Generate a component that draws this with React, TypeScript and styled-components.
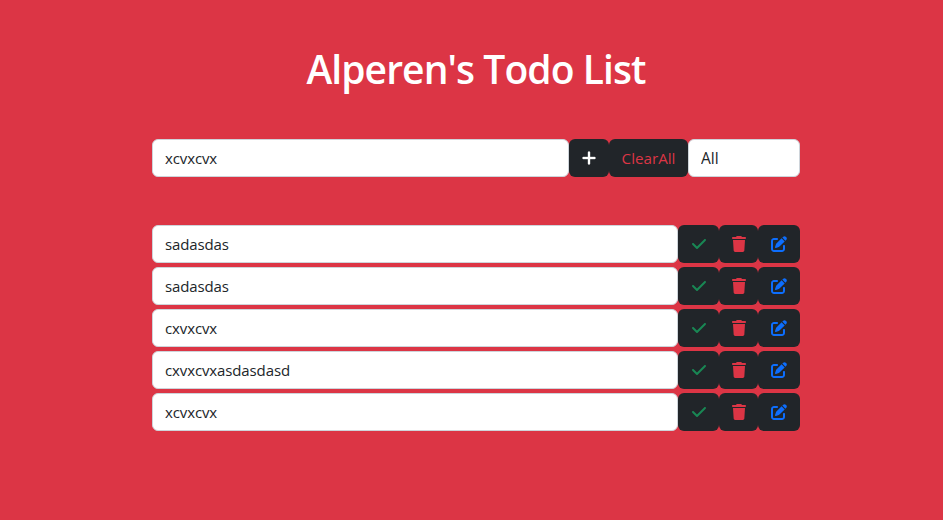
import React from "react";
import styled, { createGlobalStyle } from "styled-components";
import { FaCheck, FaPlus, FaPenToSquare, FaTrash } from "react-icons/fa6";

const Global = createGlobalStyle`
  *, *::before, *::after { box-sizing: border-box; }
  body {
    margin: 0;
    background: #dc3545;
    color: #212529;
    font: 400 16px/24px "Open Sans", "Noto Sans", sans-serif;
  }
`;

const Page = styled.main`
  width: 648px;
  margin-left: 152px;
  padding-top: 45px;
`;

const Title = styled.h1`
  margin: 0 0 46px;
  color: #fff;
  text-align: center;
  font-weight: 600;
  font-size: 39px;
  line-height: 48px;
  letter-spacing: -0.92px;
  white-space: nowrap;
`;

const Row = styled.div`
  display: flex;
  height: 38px;
`;

const TodoList = styled.section`
  display: flex;
  flex-direction: column;
  gap: 4px;
  margin-top: 48px;
`;

const Field = styled.input`
  flex: 1;
  min-width: 0;
  padding: 6px 12px;
  border: 1px solid #ced4da;
  border-radius: 6px;
  background: #fff;
  color: #212529;
  font: inherit;
  font-size: 15px;
  letter-spacing: -0.12px;
  outline: none;
`;

const Filter = styled.select`
  flex: 0 0 112px;
  padding: 6px 12px;
  border: 1px solid #ced4da;
  border-radius: 6px;
  appearance: none;
  background: #fff;
  color: #212529;
  font: inherit;
  font-size: 15.5px;
  outline: none;
`;

const Button = styled.button<{ $color: string; $width: number }>`
  display: flex;
  flex: 0 0 ${(p) => p.$width}px;
  align-items: center;
  justify-content: center;
  padding: 0;
  border: 0;
  border-radius: 6px;
  background: #212529;
  color: ${(p) => p.$color};
  font: inherit;
  font-size: 15.2px;

  svg { width: auto; height: 16px; }
`;

const AddButton = styled(Button)`
  svg { stroke: currentColor; stroke-width: 12px; }
`;

const DeleteButton = styled(Button)`
  padding-left: 1px;
`;

const todos = ["sadasdas", "sadasdas", "cxvxcvx", "cxvxcvxasdasdasd", "xcvxcvx"];

export default function App() {
  return (
    <>
      <Global />
      <Page>
        <Title>Alperen's Todo List</Title>
        <Row>
          <Field defaultValue="xcvxcvx" />
          <AddButton $color="#fff" $width={40} aria-label="Add"><FaPlus /></AddButton>
          <Button $color="#dc3545" $width={79}>ClearAll</Button>
          <Filter defaultValue="All"><option>All</option></Filter>
        </Row>
        <TodoList>
          {todos.map((todo, i) => (
            <Row key={i}>
              <Field defaultValue={todo} />
              <Button $color="#198754" $width={41} aria-label="Complete"><FaCheck /></Button>
              <DeleteButton $color="#dc3545" $width={39} aria-label="Delete"><FaTrash /></DeleteButton>
              <Button $color="#0d6efd" $width={42} aria-label="Edit"><FaPenToSquare /></Button>
            </Row>
          ))}
        </TodoList>
      </Page>
    </>
  );
}
